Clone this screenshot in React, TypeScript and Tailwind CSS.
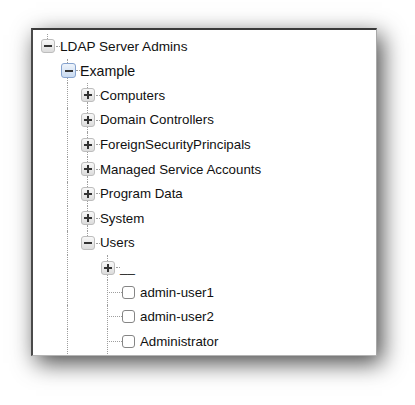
import React from 'react';

type Exp = 'minus' | 'plus' | 'minusBlue' | 'leaf';
interface Row {
  label: string;
  guides: boolean[];
  exp: Exp;
  above: boolean;
  below: boolean;
  check?: boolean;
  size?: string;
}

const rows: Row[] = [
  { label: 'LDAP Server Admins', guides: [], exp: 'minus', above: true, below: false, size: 'text-[13.6px]' },
  { label: 'Example', guides: [false], exp: 'minusBlue', above: true, below: true, size: 'text-[14.2px]' },
  { label: 'Computers', guides: [false, true], exp: 'plus', above: true, below: true },
  { label: 'Domain Controllers', guides: [false, true], exp: 'plus', above: true, below: true },
  { label: 'ForeignSecurityPrincipals', guides: [false, true], exp: 'plus', above: true, below: true },
  { label: 'Managed Service Accounts', guides: [false, true], exp: 'plus', above: true, below: true },
  { label: 'Program Data', guides: [false, true], exp: 'plus', above: true, below: true },
  { label: 'System', guides: [false, true], exp: 'plus', above: true, below: true },
  { label: 'Users', guides: [false, true], exp: 'minus', above: true, below: false },
  { label: '__', guides: [false, true, false], exp: 'plus', above: true, below: true },
  { label: 'admin-user1', guides: [false, true, false], exp: 'leaf', above: true, below: true, check: true },
  { label: 'admin-user2', guides: [false, true, false], exp: 'leaf', above: true, below: true, check: true },
  { label: 'Administrator', guides: [false, true, false], exp: 'leaf', above: true, below: true, check: true },
];

const dot = 'border-dotted border-[#9e9e9e]';

function Box({ kind }: { kind: Exp }) {
  const blue = kind === 'minusBlue';
  const plus = kind === 'plus';
  return (
    <div
      className={
        'ml-[1px] shrink-0 rounded-[3px] border grid place-items-center ' +
        (blue
          ? 'w-[15px] h-[15px] border-[#86a3cf] bg-gradient-to-b from-[#eef4fb] to-[#c9daf0]'
          : 'w-[14px] h-[14px] border-[#bdbdbd] bg-gradient-to-b from-[#f8f8f8] to-[#dcdcdc]')
      }
    >
      <div className="[grid-area:1/1] w-[8px] h-[2px] bg-[#333]" />
      {plus && <div className="[grid-area:1/1] w-[2px] h-[8px] bg-[#333]" />}
    </div>
  );
}

function TreeRow({ row }: { row: Row }) {
  return (
    <div className="flex items-stretch h-[24.6px]">
      {row.guides.map((g, i) => (
        <div key={i} className="flex w-[20px] shrink-0">
          {g && <div className={'ml-[7px] border-l ' + dot} />}
        </div>
      ))}
      {row.exp === 'leaf' ? (
        <div className="flex items-center w-[22px] shrink-0">
          <div className={'ml-[7px] self-stretch border-l ' + dot} />
          <div className={'ml-[1px] flex-1 border-t ' + dot} />
        </div>
      ) : (
        <div className="flex items-center w-[20px] shrink-0">
          <div className="flex flex-col self-stretch w-[16px]">
            <div className={'ml-[7px] flex-1 ' + (row.above ? 'border-l ' + dot : '')} />
            <Box kind={row.exp} />
            <div className={'ml-[7px] flex-1 ' + (row.below ? 'border-l ' + dot : '')} />
          </div>
          <div className={'flex-1 border-t ' + dot} />
        </div>
      )}
      {row.check && (
        <div className="self-center w-[13px] h-[13px] shrink-0 rounded-[3px] border-[1.5px] border-[#858585] bg-white mr-[5px]" />
      )}
      <span
        className={
          'self-center whitespace-nowrap text-[#111] leading-none ' + (row.size ?? 'text-[13.3px]')
        }
      >
        {row.label}
      </span>
    </div>
  );
}

export default function App() {
  return (
    <div
      className="w-[415px] h-[405px] bg-white pl-[31px] pt-[28px] overflow-hidden"
      style={{ fontFamily: '"Liberation Sans", Arial, sans-serif' }}
    >
      <div className="w-[346px] h-[328px] bg-white border-l-2 border-t-2 border-l-[#4a4a4a] border-t-[#3a3a3a] border-r border-b border-r-[#a8a8a8] border-b-[#b4b4b4] shadow-[5px_7px_22px_rgba(0,0,0,0.72)] overflow-hidden pl-[7px] pt-[4px]">
        {rows.map((r, i) => (
          <TreeRow key={i} row={r} />
        ))}
      </div>
    </div>
  );
}
